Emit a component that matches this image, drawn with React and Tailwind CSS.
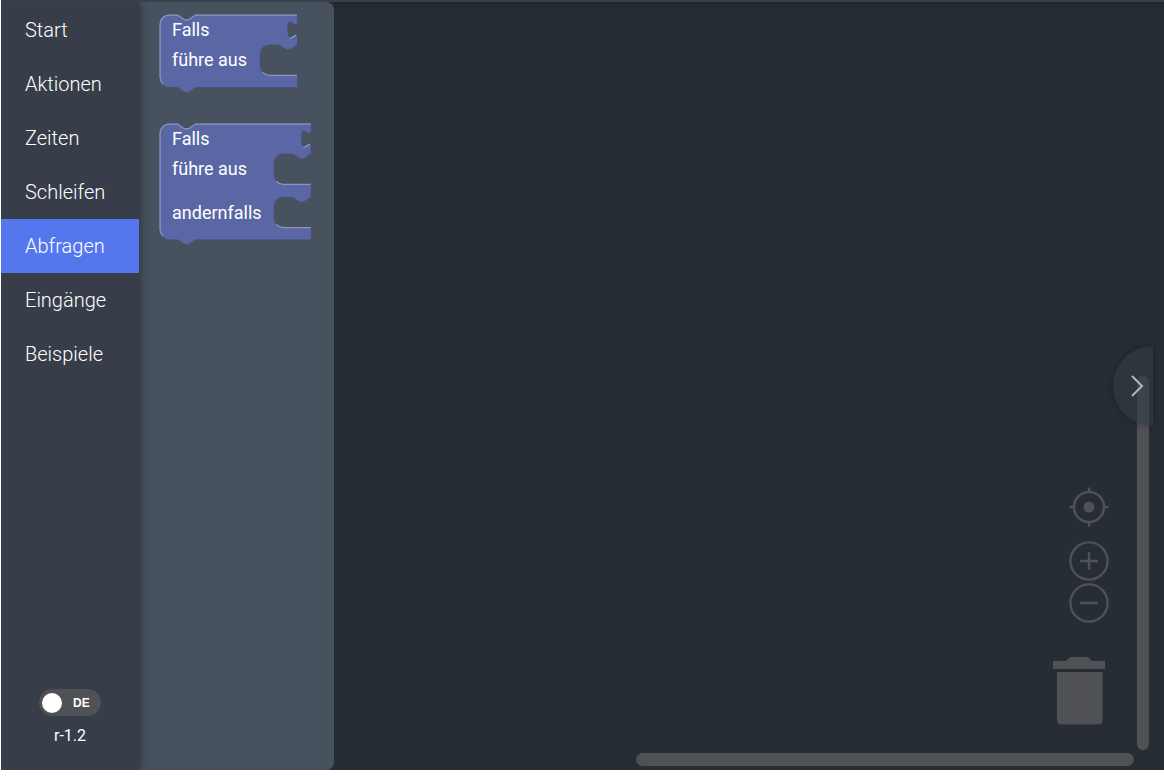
import React, { useState } from 'react'

const categories = ['Start', 'Aktionen', 'Zeiten', 'Schleifen', 'Abfragen', 'Eingänge', 'Beispiele']

const blocks = [
  {
    width: 114.5,
    inner: 83.5,
    height: 60.5,
    slots: [25],
    labels: [
      { text: 'Falls', y: 22 },
      { text: 'führe aus', y: 52 },
    ],
  },
  {
    width: 126,
    inner: 95,
    height: 96.5,
    slots: [25, 61],
    labels: [
      { text: 'Falls', y: 22 },
      { text: 'führe aus', y: 52 },
      { text: 'andernfalls', y: 96 },
    ],
  },
]

// Outline of a block: notch on top, value tab, then one mouth per statement slot
function blockPath({ width, inner, height, slots }) {
  const mouths = slots
    .map(
      (y) =>
        `V ${y} l -6,4 -3,0 -6,-4 H ${inner + 8} a 8,8 0 0,0 -8,8 v 9.5 a 8,8 0 0,0 8,8 H ${width}`
    )
    .join(' ')
  return `M 0,8 A 8,8 0 0,1 8,0 H 15 l 6,4 3,0 6,-4 H ${width} v 5 c 0,10 -8,-8 -8,7.5 s 8,-2.5 8,7.5 ${mouths} V ${height} H 30 l -6,4 -3,0 -6,-4 H 8 a 8,8 0 0,1 -8,-8 z`
}

function highlightPath({ width, inner, height, slots }) {
  const mouths = slots
    .map((y) => `M ${inner + 2.5},${y + 23} a 8,8 0 0,0 5.5,2.8 H ${width}`)
    .join(' ')
  return `M 2.7,${height - 3} A 8,8 0 0,1 0.5,${height - 8} V 8 A 7.5,7.5 0 0,1 8,0.5 H 15 l 6,4 3,0 6,-4 H ${width} M ${width - 6},20.2 l 5.5,-3 ${mouths}`
}

function Block({ block }) {
  return (
    <svg
      width={Math.round(block.width * 1.2) + 2}
      height={Math.round(block.height * 1.2) + 6}
      className="block"
      role="img"
      aria-label={block.labels.map((l) => l.text).join(' ')}
    >
      <g transform="translate(0.5 0.5) scale(1.2)">
        <path d={blockPath(block)} transform="translate(0.6 0.6)" fill="#495284" />
        <path d={blockPath(block)} fill="#5b67a5" />
        <path d={highlightPath(block)} fill="none" stroke="#8c95c0" strokeWidth="1" />
      </g>
      {block.labels.map((label) => (
        <text key={label.text} x="13" y={label.y} fill="#ffffff" className="text-[18px]">
          {label.text}
        </text>
      ))}
    </svg>
  )
}

function Sidebar({ active, onSelect }) {
  const [german, setGerman] = useState(true)

  return (
    <aside className="relative z-10 flex w-[138px] shrink-0 flex-col bg-[#373e49] shadow-[2px_0_8px_rgba(0,0,0,0.35)]">
      <nav className="flex flex-col pt-px">
        {categories.map((name) => (
          <button
            key={name}
            type="button"
            onClick={() => onSelect(name)}
            className={`h-[54px] pl-6 text-left text-xl font-light text-white ${
              active === name ? 'bg-[#5577ee]' : ''
            }`}
          >
            {name}
          </button>
        ))}
      </nav>

      {/* Language switch and version */}
      <div className="mt-auto flex flex-col items-center pb-[22px]">
        <label className="relative flex h-[27px] w-[62px] cursor-pointer items-center rounded-full bg-[#4f5154] px-[3px]">
          <input
            type="checkbox"
            aria-label="Deutsch"
            checked={german}
            onChange={() => setGerman(!german)}
            className="absolute inset-0 cursor-pointer appearance-none rounded-full"
          />
          <span className="size-5 rounded-full bg-white" />
          <span className="ml-[11px] font-['Liberation_Sans',sans-serif] text-xs font-bold text-white">DE</span>
        </label>
        <span className="mt-2 text-base leading-6 text-white">r-1.2</span>
      </div>
    </aside>
  )
}

function WorkspaceControls() {
  return (
    <div className="absolute right-[55px] bottom-[45px] flex flex-col items-end">
      <button type="button" aria-label="Zentrieren" className="size-10">
        <svg viewBox="0 0 40 40" fill="none" stroke="#4f5155" strokeWidth="2.5">
          <circle cx="20" cy="20" r="15" />
          <circle cx="20" cy="20" r="5.5" fill="#4f5155" stroke="none" />
          <path d="M20 0.5v5M20 34.5v5M0.5 20h5M34.5 20h5" />
        </svg>
      </button>
      <button type="button" aria-label="Vergrößern" className="mt-3.5 size-10">
        <svg viewBox="0 0 40 40" fill="none" stroke="#4f5155" strokeWidth="2.4">
          <circle cx="20" cy="20" r="18.6" />
          <path d="M20 11v18M11 20h18" />
        </svg>
      </button>
      <button type="button" aria-label="Verkleinern" className="mt-0.5 size-10">
        <svg viewBox="0 0 40 40" fill="none" stroke="#4f5155" strokeWidth="2.4">
          <circle cx="20" cy="20" r="18.6" />
          <path d="M11 20h18" />
        </svg>
      </button>
      <button type="button" aria-label="Papierkorb" className="mt-8 mr-0.5">
        <svg width="55" height="70" viewBox="0 0 55 70" fill="#4f5155">
          <path d="M1 6h13l3-3q1-1 3-1h14q2 0 3 1l3 3h13v8H1z" />
          <path d="M5 17h45.500v48q0 4.500-4.500 4.500H9.500q-4.500 0-4.500-4.500z" />
        </svg>
      </button>
    </div>
  )
}

export default function App() {
  const [active, setActive] = useState('Abfragen')

  return (
    <div className="h-screen bg-white pb-1.5 pl-px font-[Roboto,sans-serif]">
      <div className="flex h-full overflow-hidden border-t-2 border-[#38404b] bg-[#272d34]">
        <Sidebar active={active} onSelect={setActive} />

        <section className="flex w-[195px] shrink-0 flex-col items-start gap-[30px] rounded-r-lg bg-[#48525f] pt-3 pl-5">
          {blocks.map((block) => (
            <Block key={block.height} block={block} />
          ))}
        </section>

        <main className="relative flex-1 overflow-hidden shadow-[inset_0_6px_8px_-6px_rgba(0,0,0,0.3)]">
          <WorkspaceControls />
          <div className="absolute right-[15px] bottom-5 h-[374px] w-3 rounded-full bg-[#4f5155]" />
          <div className="absolute right-[30px] bottom-1 h-[13px] w-3/5 rounded-full bg-[#4f5155]" />
          <button
            type="button"
            aria-label="Öffnen"
            className="absolute right-[11px] bottom-[344px] flex h-20 w-10 items-center justify-end rounded-l-full bg-[#323a45]/60 pr-2 shadow-[0_0_10px_rgba(0,0,0,0.25)]"
          >
            <svg width="14" height="22" viewBox="0 0 14 22" fill="none" stroke="#b4b7bb" strokeWidth="2">
              <path d="M1 1l10 10L1 21" />
            </svg>
          </button>
        </main>
      </div>
    </div>
  )
}
